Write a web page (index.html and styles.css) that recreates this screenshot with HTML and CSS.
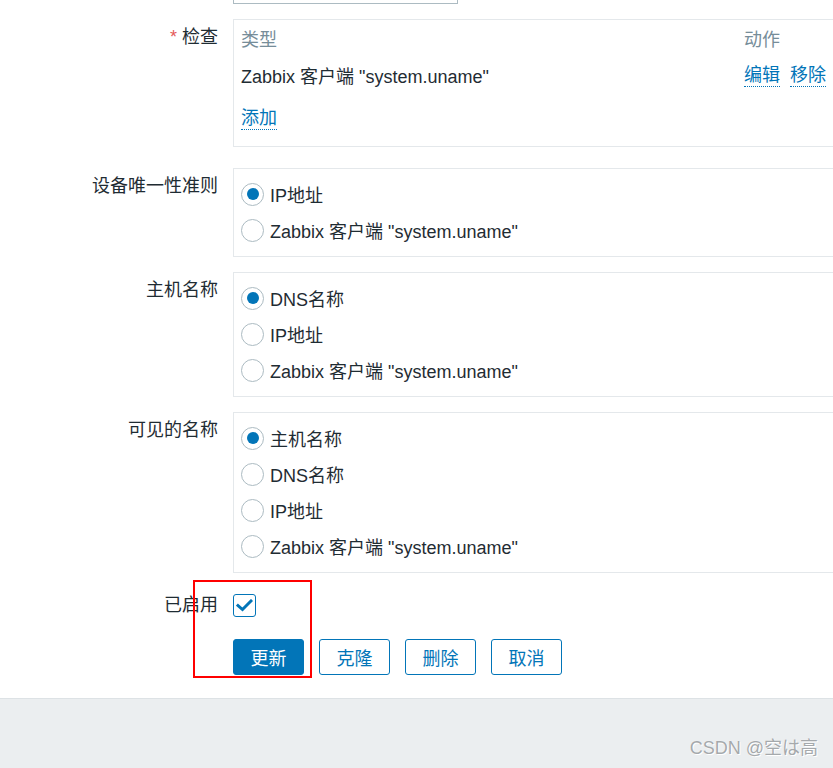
FILE: index.html
```html
<!DOCTYPE html>
<html lang="zh">
<head>
<meta charset="utf-8">
<title>自动发现动作</title>
<link rel="stylesheet" href="styles.css">
</head>
<body>
<div class="page">
  <div class="form">
    <div class="top-input"></div>

    <div class="row row-check">
      <div class="label"><span class="req">*</span> 检查</div>
      <div class="box table-box">
        <div class="trow thead">
          <div class="tcell">类型</div>
          <div class="tcell">动作</div>
        </div>
        <div class="trow tdata">
          <div class="tcell">Zabbix 客户端 "system.uname"</div>
          <div class="tcell links"><a class="link">编辑</a><a class="link">移除</a></div>
        </div>
        <div class="trow tadd">
          <div class="tcell"><a class="link">添加</a></div>
        </div>
      </div>
    </div>

    <div class="row row-gap-lg">
      <div class="label">设备唯一性准则</div>
      <div class="box radio-box">
        <label class="radio-row"><span class="radio checked"></span>IP地址</label>
        <label class="radio-row"><span class="radio"></span>Zabbix 客户端 "system.uname"</label>
      </div>
    </div>

    <div class="row row-gap">
      <div class="label">主机名称</div>
      <div class="box radio-box">
        <label class="radio-row"><span class="radio checked"></span>DNS名称</label>
        <label class="radio-row"><span class="radio"></span>IP地址</label>
        <label class="radio-row"><span class="radio"></span>Zabbix 客户端 "system.uname"</label>
      </div>
    </div>

    <div class="row row-gap">
      <div class="label">可见的名称</div>
      <div class="box radio-box">
        <label class="radio-row"><span class="radio checked"></span>主机名称</label>
        <label class="radio-row"><span class="radio"></span>DNS名称</label>
        <label class="radio-row"><span class="radio"></span>IP地址</label>
        <label class="radio-row"><span class="radio"></span>Zabbix 客户端 "system.uname"</label>
      </div>
    </div>

    <div class="row row-enabled">
      <div class="label">已启用</div>
      <div class="field">
        <span class="checkbox">
          <svg width="17" height="13" viewBox="0 0 17 13"><polyline points="2,6.5 6.5,10.5 15,2" fill="none" stroke="#0275b8" stroke-width="3" stroke-linecap="square" stroke-linejoin="miter"/></svg>
        </span>
      </div>
    </div>

    <div class="row row-buttons">
      <div class="label"></div>
      <div class="buttons">
        <button class="btn primary">更新</button>
        <button class="btn">克隆</button>
        <button class="btn">删除</button>
        <button class="btn">取消</button>
      </div>
    </div>

    <div class="highlight"></div>
  </div>
  <div class="footer">
    <span class="watermark">CSDN @空は高</span>
  </div>
</div>
</body>
</html>
```

FILE: styles.css
```css
html, body {
  margin: 0;
  padding: 0;
  background: #ffffff;
  overflow: hidden;
}

body {
  font-family: "Liberation Sans", Arial, "Noto Sans CJK SC", sans-serif;
  font-size: 18px;
  color: #1f2c33;
  width: 833px;
  height: 768px;
}

.page {
  display: flex;
  flex-direction: column;
  height: 768px;
}

.form {
  position: relative;
  flex: 0 0 auto;
  height: 698px;
}

.top-input {
  margin-left: 233px;
  width: 223px;
  height: 3px;
  border: 1px solid #acbbc2;
  border-top: none;
}

.row {
  display: grid;
  grid-template-columns: 218px 620px;
  column-gap: 15px;
}

.row-check { margin-top: 15px; }
.row-gap-lg { margin-top: 21px; }
.row-gap { margin-top: 15px; }

.label {
  text-align: right;
  line-height: 27px;
  padding-top: 5px;
  white-space: nowrap;
}

.req {
  color: #e45959;
}

.box {
  border: 1px solid #e4e8eb;
  box-sizing: border-box;
}

.table-box {
  padding: 7px 0 6px 7px;
}

.trow {
  display: grid;
  grid-template-columns: 503px auto;
  align-items: center;
}

.thead {
  height: 27px;
  line-height: 27px;
  color: #768d99;
}

.tdata {
  height: 42px;
}

.tadd {
  height: 44px;
}

.tcell {
  white-space: nowrap;
}

.links {
  display: flex;
  gap: 10px;
}

.link {
  display: inline-block;
  color: #0275b8;
  line-height: 22px;
  border-bottom: 1px dotted #0275b8;
  cursor: pointer;
}

.radio-box {
  padding: 7px 0 8px 7px;
}

.radio-row {
  display: flex;
  align-items: center;
  gap: 6px;
  height: 36px;
  white-space: nowrap;
}

.radio {
  width: 21px;
  height: 21px;
  border: 1px solid #acbbc2;
  border-radius: 50%;
  background: #ffffff;
  display: flex;
  align-items: center;
  justify-content: center;
  flex: 0 0 auto;
}

.radio.checked::after {
  content: "";
  width: 12px;
  height: 12px;
  border-radius: 50%;
  background: #0275b8;
}

.row-enabled {
  margin-top: 21px;
  align-items: center;
  height: 23px;
}

.row-enabled .label {
  padding-top: 0;
  line-height: 23px;
}

.field {
  display: flex;
  align-items: center;
}

.checkbox {
  width: 21px;
  height: 21px;
  border: 1px solid #0275b8;
  border-radius: 3px;
  display: flex;
  align-items: center;
  justify-content: center;
}

.row-buttons {
  margin-top: 22px;
}

.row-buttons .label {
  padding-top: 0;
}

.buttons {
  display: flex;
  gap: 15px;
}

.btn {
  width: 71px;
  height: 36px;
  box-sizing: border-box;
  border: 1px solid #0275b8;
  border-radius: 3px;
  background: #ffffff;
  color: #0275b8;
  font-family: "Liberation Sans", Arial, "Noto Sans CJK SC", sans-serif;
  font-size: 18px;
  padding: 0;
  cursor: pointer;
}

.btn.primary {
  background: #0275b8;
  color: #ffffff;
}

.highlight {
  position: absolute;
  left: 193px;
  top: 580px;
  width: 115px;
  height: 94px;
  border: 2px solid #ff0000;
  pointer-events: none;
}

.footer {
  flex: 1 1 auto;
  background: #ebeef0;
  border-top: 1px solid #dde2e5;
  display: flex;
  justify-content: flex-end;
  align-items: flex-end;
  padding: 0 15px 8px 0;
}

.watermark {
  font-size: 18px;
  color: #a5a9ac;
  text-shadow: 0 0 1px #ffffff, 1px 1px 0 #ffffff;
  line-height: 24px;
}
```
